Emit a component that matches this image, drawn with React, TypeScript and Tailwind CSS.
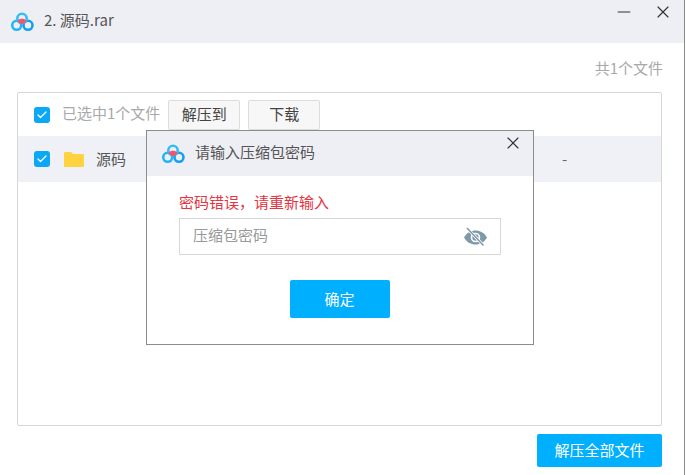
import { Check, X, Minus } from "lucide-react";

const font = { fontFamily: '"Noto Sans CJK SC", "Noto Sans", sans-serif' };

function Logo() {
  return (
    <svg width="24" height="20" viewBox="0 0 24 20" fill="none">
      <circle cx="6.700" cy="13.300" r="4.500" stroke="#23b4f8" strokeWidth="2.600" />
      <circle cx="18" cy="13.300" r="4.500" stroke="#159ff0" strokeWidth="2.600" />
      <circle cx="12" cy="6.500" r="4.700" stroke="#35bdf6" strokeWidth="2.600" />
      <path d="M7.400 8.800c1.200-1.500 2.900-2.100 4.600-2.100s3.400.6 4.600 2.100c-1 2-2.600 3.200-4.600 3.200s-3.600-1.200-4.600-3.200z" fill="#f0566e" />
    </svg>
  );
}

function Tick() {
  return (
    <span className="flex h-4 w-4 items-center justify-center rounded-[3px] bg-[#0aa8f5]">
      <Check size={12} strokeWidth={2.6} className="text-white" />
    </span>
  );
}

function EyeOff() {
  return (
    <svg width="25" height="20" viewBox="0 0 25 20" fill="none">
      <path
        d="M1 10.500C4 5.500 8 3.500 12.500 3.500S21 5.500 24 10.500C21 15.500 17 17.500 12.500 17.500S4 15.500 1 10.500z"
        fill="#7f99a8"
      />
      <circle cx="12.500" cy="10.500" r="4" stroke="#fff" strokeWidth="1.600" />
      <path d="M4.500 1.500l16 17" stroke="#fff" strokeWidth="3" />
      <path d="M4 1l16.500 17.500" stroke="#7f99a8" strokeWidth="1.500" />
    </svg>
  );
}

export default function App() {
  return (
    <div
      className="relative h-[475px] w-[686px] overflow-hidden bg-white text-[15px] text-[#444]"
      style={font}
    >
      <div className="flex h-[475px] w-[685px] flex-col border-r border-[#8a8a8a]">
        <div className="flex h-[43px] items-center justify-between bg-[#eeeff4] pl-[10px] pr-[11px]">
          <div className="flex items-center gap-[10px]">
            <Logo />
            <span className="mb-[2px] text-[15px] text-[#555]">2. 源码.rar</span>
          </div>
          <div className="mb-[20px] flex items-center gap-[19px] text-[#333]">
            <Minus size={20} strokeWidth={1.400} />
            <X size={20} strokeWidth={1.400} />
          </div>
        </div>

        <div className="flex flex-1 flex-col px-[17px]">
          <div className="mt-[15px] pr-[4px] text-right text-[15px] leading-5 text-[#a8a8a8]">共1个文件</div>

          <div className="mt-[14px] h-[334px] w-[645px] rounded-[2px] border border-[#d6d6d6]">
            <div className="flex h-[43px] items-center pl-[16px]">
              <Tick />
              <span className="mb-[2px] ml-[12px] text-[15px] text-[#a8a8a8]">已选中1个文件</span>
              <button className="ml-[8px] h-[30px] w-[72px] rounded-[2px] border border-[#dcdcdc] bg-[#f7f7f7] text-[15px] text-[#444]">
                解压到
              </button>
              <button className="ml-[8px] h-[30px] w-[72px] rounded-[2px] border border-[#dcdcdc] bg-[#f7f7f7] text-[15px] text-[#444]">
                下载
              </button>
            </div>
            <div className="flex h-[46px] items-center bg-[#f0f1f6] pl-[16px]">
              <Tick />
              <svg width="20" height="16" viewBox="0 0 20 16" className="ml-[14px]">
                <path d="M0 2a1 1 0 0 1 1-1h6l2 2h10a1 1 0 0 1 1 1v11a1 1 0 0 1-1 1H1a1 1 0 0 1-1-1z" fill="#ffd340" />
              </svg>
              <span className="ml-[12px] text-[15px] text-[#555]">源码</span>
              <span className="ml-[436px] text-[15px] text-[#666]">-</span>
            </div>
          </div>

          <div className="mt-[8px] flex justify-end pr-[5px]">
            <button className="h-[33px] w-[125px] rounded-[2px] bg-[#00b0ff] text-[15px] text-white">
              解压全部文件
            </button>
          </div>
        </div>
      </div>

      <div className="absolute left-[146px] top-[130px] flex h-[215px] w-[388px] flex-col border border-[#8c8c8c] bg-white">
        <div className="relative flex h-[45px] items-center bg-[#eeeff4] pl-[14px]">
          <Logo />
          <span className="mb-[3px] ml-[10px] text-[15px] text-[#555]">请输入压缩包密码</span>
          <X size={20} strokeWidth={1.400} className="absolute right-[10px] top-[2px] text-[#333]" />
        </div>
        <div className="px-[32px] pt-[16px]">
          <div className="text-[15px] leading-5 text-[#e5333f]">密码错误，请重新输入</div>
          <div className="mt-[6px] flex h-[37px] w-[322px] items-center justify-between border border-[#d8d8d8] pl-[13px] pr-[12px]">
            <span className="mb-[2px] text-[15px] text-[#999]">压缩包密码</span>
            <EyeOff />
          </div>
          <div className="mt-[25px] flex justify-center pr-[1px]">
            <button className="h-[38px] w-[100px] rounded-[2px] bg-[#00b0ff] text-[15px] text-white">确定</button>
          </div>
        </div>
      </div>
    </div>
  );
}
